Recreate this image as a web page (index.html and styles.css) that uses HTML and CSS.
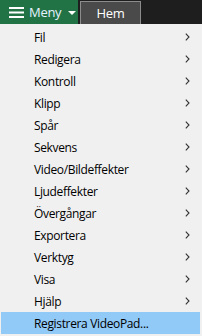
FILE: index.html
```html
<!DOCTYPE html>
<html>
<head>
<meta charset="utf-8">
<link rel="stylesheet" href="styles.css">
</head>
<body>
<div class="bar">
  <div class="menu-btn">
    <svg class="burger" width="15" height="11" viewBox="0 0 15 11"><rect x="0" y="0" width="15" height="2" fill="#fff"/><rect x="0" y="4.5" width="15" height="2" fill="#fff"/><rect x="0" y="9" width="15" height="2" fill="#fff"/></svg>
    <span class="menu-label">Meny</span>
    <svg class="caret" width="8" height="4" viewBox="0 0 8 4"><path d="M0 0H8L4 4Z" fill="#fff"/></svg>
  </div>
  <div class="tab">Hem</div>
</div>
<ul class="menu">
  <li class="item"><span>Fil</span><svg class="arr" width="5" height="8" viewBox="0 0 5 8"><path d="M0.8 0.6L4 4L0.8 7.4" fill="none" stroke="#333" stroke-width="1.1"/></svg></li>
  <li class="item"><span>Redigera</span><svg class="arr" width="5" height="8" viewBox="0 0 5 8"><path d="M0.8 0.6L4 4L0.8 7.4" fill="none" stroke="#333" stroke-width="1.1"/></svg></li>
  <li class="item"><span>Kontroll</span><svg class="arr" width="5" height="8" viewBox="0 0 5 8"><path d="M0.8 0.6L4 4L0.8 7.4" fill="none" stroke="#333" stroke-width="1.1"/></svg></li>
  <li class="item"><span>Klipp</span><svg class="arr" width="5" height="8" viewBox="0 0 5 8"><path d="M0.8 0.6L4 4L0.8 7.4" fill="none" stroke="#333" stroke-width="1.1"/></svg></li>
  <li class="item"><span>Spår</span><svg class="arr" width="5" height="8" viewBox="0 0 5 8"><path d="M0.8 0.6L4 4L0.8 7.4" fill="none" stroke="#333" stroke-width="1.1"/></svg></li>
  <li class="item"><span>Sekvens</span><svg class="arr" width="5" height="8" viewBox="0 0 5 8"><path d="M0.8 0.6L4 4L0.8 7.4" fill="none" stroke="#333" stroke-width="1.1"/></svg></li>
  <li class="item"><span>Video/Bildeffekter</span><svg class="arr" width="5" height="8" viewBox="0 0 5 8"><path d="M0.8 0.6L4 4L0.8 7.4" fill="none" stroke="#333" stroke-width="1.1"/></svg></li>
  <li class="item"><span>Ljudeffekter</span><svg class="arr" width="5" height="8" viewBox="0 0 5 8"><path d="M0.8 0.6L4 4L0.8 7.4" fill="none" stroke="#333" stroke-width="1.1"/></svg></li>
  <li class="item"><span>Övergångar</span><svg class="arr" width="5" height="8" viewBox="0 0 5 8"><path d="M0.8 0.6L4 4L0.8 7.4" fill="none" stroke="#333" stroke-width="1.1"/></svg></li>
  <li class="item"><span>Exportera</span><svg class="arr" width="5" height="8" viewBox="0 0 5 8"><path d="M0.8 0.6L4 4L0.8 7.4" fill="none" stroke="#333" stroke-width="1.1"/></svg></li>
  <li class="item"><span>Verktyg</span><svg class="arr" width="5" height="8" viewBox="0 0 5 8"><path d="M0.8 0.6L4 4L0.8 7.4" fill="none" stroke="#333" stroke-width="1.1"/></svg></li>
  <li class="item"><span>Visa</span><svg class="arr" width="5" height="8" viewBox="0 0 5 8"><path d="M0.8 0.6L4 4L0.8 7.4" fill="none" stroke="#333" stroke-width="1.1"/></svg></li>
  <li class="item"><span>Hjälp</span><svg class="arr" width="5" height="8" viewBox="0 0 5 8"><path d="M0.8 0.6L4 4L0.8 7.4" fill="none" stroke="#333" stroke-width="1.1"/></svg></li>
  <li class="item active"><span>Registrera VideoPad...</span></li>
</ul>
</body>
</html>
```
FILE: styles.css
```css
html, body { margin: 0; padding: 0; }
body {
  width: 202px; height: 336px; overflow: hidden;
  background: #f0f0f0;
  font-family: "Open Sans", "Noto Sans", sans-serif;
  font-size: 12px;
}
.bar {
  height: 24px;
  background: #1e1e1e;
  display: flex;
  align-items: stretch;
}
.menu-btn {
  width: 78px;
  background: #217346;
  display: flex;
  align-items: center;
  box-sizing: border-box;
  padding-left: 9px;
}
.burger { margin-right: 5px; }
.menu-label { color: #e6f2ff; font-size: 13px; letter-spacing: -0.3px; }
.caret { margin-left: 7px; margin-top: 1px; }
.tab {
  margin-left: 2px;
  margin-top: 1px;
  width: 61px;
  box-sizing: border-box;
  background: #4a4a4a;
  border: 1px solid #8c8c8c;
  border-bottom: none;
  color: #fff;
  font-size: 13px;
  letter-spacing: -0.3px;
  display: flex;
  align-items: center;
  justify-content: center;
}
.menu {
  list-style: none;
  margin: 0;
  padding: 2px 2px 2px 1px;
}
.item {
  height: 22px;
  display: flex;
  align-items: center;
  justify-content: space-between;
  padding-left: 33px;
  padding-right: 10px;
  color: #000;
  letter-spacing: -0.35px;
}
.active { background: #91c9f7; }
```
